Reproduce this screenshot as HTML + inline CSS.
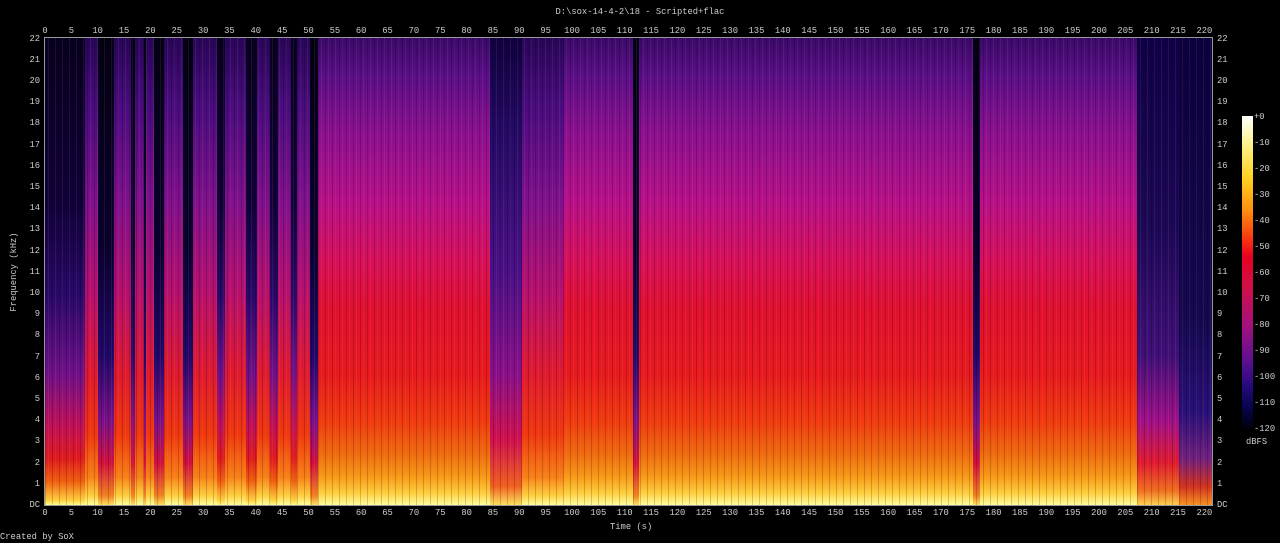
<!DOCTYPE html><html><head><style>
body{margin:0;background:#000;width:1280px;height:543px;overflow:hidden;position:relative;font-family:"Liberation Mono",monospace;font-size:8.8px;color:#ccc}
.t{position:absolute;white-space:nowrap;line-height:10px}
#plot{position:absolute;left:45px;top:38px;width:1167px;height:467px;background:#050010;overflow:hidden}
.s{position:absolute;top:0;height:100%}
.L{background:linear-gradient(#3a0a6a 0%,#5a0e88 8%,#8a1090 20%,#b8108a 35%,#d8105a 48%,#e01030 58%,#e81a20 72%,#f03a10 82%,#f06a10 89%,#f89a18 94%,#ffd040 97.5%,#ffffa0 100%)}
.M{background:linear-gradient(#080020 0%,#10003a 35%,#28086a 55%,#70108a 72%,#c0105a 83%,#e01a20 90%,#f06010 95%,#ffd040 99%,#ffff90 100%)}
.D{background:linear-gradient(#040014 0%,#0a0030 45%,#20086a 68%,#7a108a 82%,#d01040 91%,#f08020 98%,#ffe060 100%)}
.Q{background:linear-gradient(#100040 0%,#240a66 20%,#4a1088 50%,#8a108a 72%,#d01050 86%,#f06020 96%,#ffe060 100%)}
.P{background:linear-gradient(#28065a 0%,#4a0c80 15%,#80108e 35%,#b8106e 55%,#e01a30 72%,#f03810 85%,#f88018 94%,#ffd040 98%,#ffffa0 100%)}
.F{background:linear-gradient(#100048 0%,#1c0858 40%,#40107a 68%,#a0108a 82%,#e01a30 91%,#f07020 97%,#ffd050 100%)}
.G{background:linear-gradient(#0c0040 0%,#160850 60%,#28107a 80%,#702080 90%,#d03020 96%,#f89020 100%)}
#tex{position:absolute;inset:0;background:repeating-linear-gradient(90deg,rgba(0,0,0,.18) 0 1px,rgba(0,0,0,0) 1px 3px,rgba(255,200,60,.08) 3px 4px,rgba(0,0,0,0) 4px 7px)}
#box{position:absolute;left:44px;top:37px;width:1167px;height:467px;border:1px solid #999}
</style></head><body>
<div class="t" style="left:0;width:1280px;text-align:center;top:7px">D:\sox-14-4-2\18 - Scripted+flac</div>
<div id="plot"></div>
<div id="box"></div>
<div class="t" style="left:610px;top:522px">Time (s)</div>
<div class="t" style="left:0;top:532px">Created by SoX</div>
<div class="t" style="left:-36px;top:267px;transform:rotate(-90deg);width:100px;text-align:center">Frequency (kHz)</div>
<div style="position:absolute;left:1242px;top:116px;width:11px;height:312px;background:linear-gradient(#ffffff 0%,#fff080 10%,#ffd020 20%,#ff9010 30%,#f83010 40%,#e80020 45%,#d0104a 55%,#a01080 68%,#601090 78%,#2a0a80 86%,#0a0450 93%,#000010 100%)"></div>
<div class="t" style="left:1246px;top:437px">dBFS</div>
<div id="lab"></div>
<script>
var segs=[[0,7.5,'M'],[7.5,10,'P'],[10,13,'D'],[13,16.3,'P'],[16.3,17,'D'],[17,18.6,'P'],[18.6,19,'D'],[19,20.5,'P'],[20.5,22.5,'D'],[22.5,26,'P'],[26,28,'D'],[28,32.5,'P'],[32.5,34,'M'],[34,38,'P'],[38,40,'M'],[40,42.5,'P'],[42.5,44,'M'],[44,46.5,'P'],[46.5,47.5,'M'],[47.5,50,'P'],[50,51.5,'D'],[51.5,84,'L'],[84,90,'Q'],[90,98,'P'],[98,111,'L'],[111,112,'D'],[112,175,'L'],[175,176.5,'D'],[176.5,206,'L'],[206,214,'F'],[214,222,'G']];
var p=document.getElementById('plot'),h='';
segs.forEach(function(s){h+='<div class="s '+s[2]+'" style="left:'+(s[0]*5.3)+'px;width:'+((s[1]-s[0])*5.3+0.5)+'px"></div>'});
p.innerHTML=h+'<div id="tex"></div>';
var l='';
for(var t=0;t<=220;t+=5){var x=45+t*5.27;
l+='<div class="t" style="left:'+(x-15)+'px;width:30px;text-align:center;top:26px">'+t+'</div>';
l+='<div class="t" style="left:'+(x-15)+'px;width:30px;text-align:center;top:508px">'+t+'</div>';}
for(var f=0;f<=22;f++){var y=505-f*21.2-5;var s=f?f:'DC';
l+='<div class="t" style="left:10px;width:30px;text-align:right;top:'+y+'px">'+s+'</div>';
l+='<div class="t" style="left:1217px;top:'+y+'px">'+s+'</div>';}
for(var d=0;d<=12;d++){l+='<div class="t" style="left:1254px;top:'+(112+d*26)+'px">'+(d?'-'+d*10:'+0')+'</div>';}
document.getElementById('lab').innerHTML=l;
</script>
</body></html>
